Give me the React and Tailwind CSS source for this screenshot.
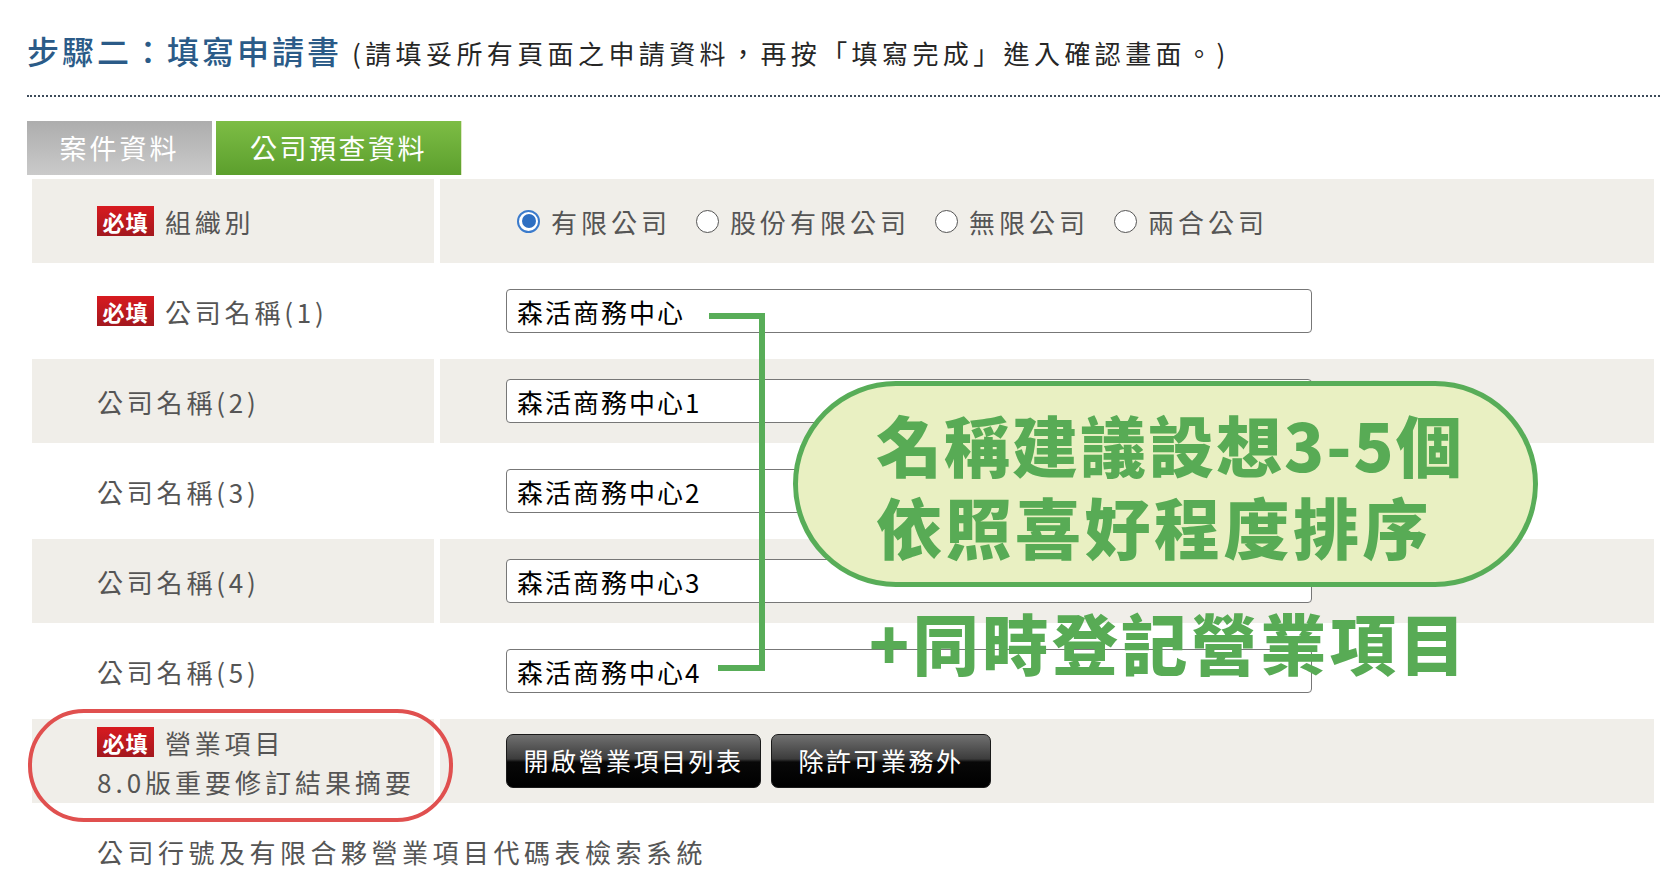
import React from "react";

const FONT = "font-['Noto_Sans_CJK_TC','Noto_Sans',sans-serif]";

function Badge() {
  return (
    <span className="mr-[11px] flex h-[30px] w-[57px] items-center justify-center bg-[linear-gradient(to_bottom,#d81a20,#a3181e)] text-[22px] font-bold leading-none tracking-[1px] text-white">
      必填
    </span>
  );
}

function Radio({ checked, label }) {
  return (
    <label className="flex items-center">
      {checked ? (
        <span className="flex h-[23px] w-[23px] items-center justify-center rounded-full border-2 border-[#3b7bcc] bg-white">
          <span className="h-[14px] w-[14px] rounded-full bg-[#2e6fc2]" />
        </span>
      ) : (
        <span className="h-[23px] w-[23px] rounded-full border-[1.5px] border-[#555] bg-white" />
      )}
      <span className="ml-[11px] text-[26px] tracking-[4px] text-[#555]">{label}</span>
    </label>
  );
}

function Row({ gray, label, children }) {
  const bg = gray ? "bg-[#f0eee9]" : "";
  return (
    <>
      <div className={`flex h-[84px] items-center pl-[65px] ${bg}`}>{label}</div>
      <div className={`flex h-[84px] items-center pl-[66px] ${bg}`}>{children}</div>
    </>
  );
}

function NameInput({ value }) {
  return (
    <input
      readOnly
      value={value}
      className="h-[44px] w-[806px] rounded-[4px] border border-[#777] bg-white px-[10px] text-[26px] tracking-[2px] text-black outline-none"
    />
  );
}

function Label({ text, required }) {
  return (
    <div className="flex items-center">
      {required && <Badge />}
      <span className="text-[26px] tracking-[3.8px] text-[#555]">{text}</span>
    </div>
  );
}

export default function App() {
  return (
    <div className={`relative min-h-screen w-full overflow-hidden bg-white pl-[27px] pt-[30px] ${FONT}`}>
      {/* heading */}
      <div className="flex h-[40px] items-baseline">
        <span className="text-[32px] font-medium leading-[40px] tracking-[3px] text-[#2b5b88]">
          步驟二：填寫申請書
        </span>
        <span className="ml-[10px] text-[26px] leading-[40px] tracking-[4.4px] text-[#262626]">
          (請填妥所有頁面之申請資料，再按「填寫完成」進入確認畫面。)
        </span>
      </div>
      <div className="mt-[25px] w-[1633px] border-t-2 border-dotted border-[#3d4b5a]" />

      {/* tabs */}
      <div className="mt-[24px] flex gap-[4px]">
        <div className="flex h-[54px] w-[185px] items-center justify-center bg-[linear-gradient(to_bottom,#adadad,#cacaca)] text-[27px] tracking-[3px] text-white">
          案件資料
        </div>
        <div className="flex h-[54px] w-[246px] items-center justify-center border-r border-[#dfe8c4] bg-[linear-gradient(to_bottom,#7dbd45,#5c9f2d)] text-[27px] tracking-[2.5px] text-white">
          公司預查資料
        </div>
      </div>

      {/* form table */}
      <div className="ml-[5px] mt-[4px] grid grid-cols-[402px_1214px] gap-x-[6px] gap-y-[6px]">
        <Row gray label={<Label required text="組織別" />}>
          <div className="ml-[11px] flex items-center gap-[25px]">
            <Radio checked label="有限公司" />
            <Radio label="股份有限公司" />
            <Radio label="無限公司" />
            <Radio label="兩合公司" />
          </div>
        </Row>
        <Row label={<Label required text="公司名稱(1)" />}>
          <NameInput value="森活商務中心" />
        </Row>
        <Row gray label={<Label text="公司名稱(2)" />}>
          <NameInput value="森活商務中心1" />
        </Row>
        <Row label={<Label text="公司名稱(3)" />}>
          <NameInput value="森活商務中心2" />
        </Row>
        <Row gray label={<Label text="公司名稱(4)" />}>
          <NameInput value="森活商務中心3" />
        </Row>
        <Row label={<Label text="公司名稱(5)" />}>
          <NameInput value="森活商務中心4" />
        </Row>
        <Row
          gray
          label={
            <div className="flex flex-col">
              <Label required text="營業項目" />
              <span className="mt-[2px] text-[26px] leading-[36px] tracking-[4px] text-[#555]">
                8.0版重要修訂結果摘要
              </span>
            </div>
          }
        >
          <div className="flex gap-[10px]">
            <button className="h-[54px] w-[255px] rounded-[7px] border border-[#1a1a1a] bg-[linear-gradient(to_bottom,#707070_0%,#3c3c3c_46%,#080808_52%,#000_100%)] text-[25px] tracking-[2.5px] text-white">
              開啟營業項目列表
            </button>
            <button className="h-[54px] w-[220px] rounded-[7px] border border-[#1a1a1a] bg-[linear-gradient(to_bottom,#707070_0%,#3c3c3c_46%,#080808_52%,#000_100%)] text-[25px] tracking-[2.5px] text-white">
              除許可業務外
            </button>
          </div>
        </Row>
      </div>

      <div className="ml-[70px] mt-[31px] text-[26px] leading-[36px] tracking-[4.5px] text-[#555]">
        公司行號及有限合夥營業項目代碼表檢索系統
      </div>

      {/* annotations */}
      <svg className="pointer-events-none absolute left-0 top-0" width="1667" height="888">
        <polyline
          points="709,316 762,316 762,668 718,668"
          fill="none"
          stroke="#58ad58"
          strokeWidth="6"
        />
      </svg>
      <div className="pointer-events-none absolute left-[28px] top-[709px] h-[113px] w-[425px] rounded-[56px] border-4 border-[#e0504f]" />
      <div className="absolute left-[793px] top-[381px] flex h-[206px] w-[745px] flex-col justify-center rounded-full border-[5px] border-[#58ad58] bg-[#e9f0c2] pl-[78px]">
        <div className="text-[66px] font-black leading-[82px] tracking-[2px] text-[#58ab55]">名稱建議設想3-5個</div>
        <div className="text-[66px] font-black leading-[82px] tracking-[3.5px] text-[#58ab55]">依照喜好程度排序</div>
      </div>
      <div className="absolute left-[869px] top-[600px] text-[66px] font-black leading-[82px] tracking-[3.5px] text-[#58ab55]">
        +同時登記營業項目
      </div>
    </div>
  );
}
